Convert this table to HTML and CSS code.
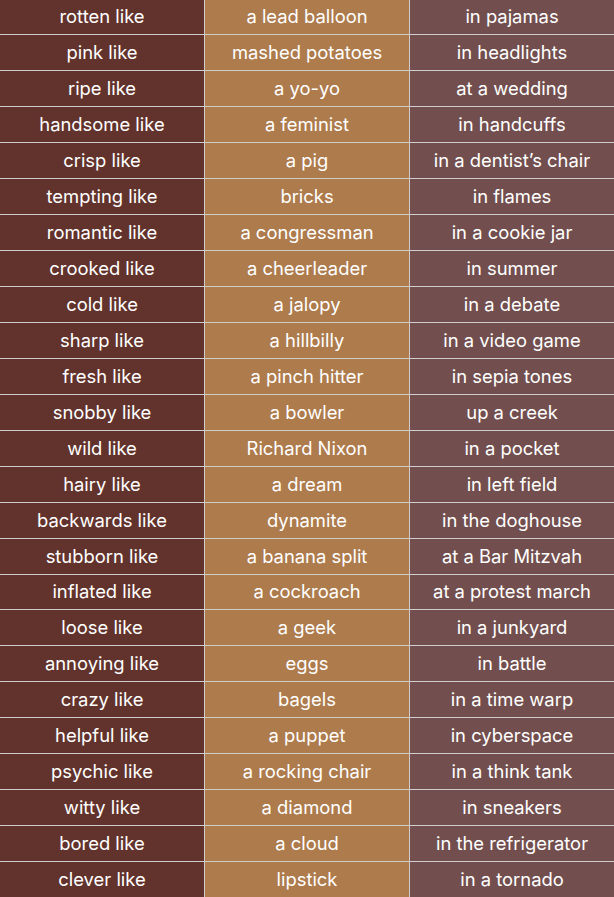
FILE: index.html
```html
<!DOCTYPE html>
<html>
<head>
<meta charset="utf-8">
<link rel="stylesheet" href="styles.css">
</head>
<body>
<div class="table">
<div class="row"><div class="cell c1">rotten like</div><div class="cell c2">a lead balloon</div><div class="cell c3">in pajamas</div></div>
<div class="row"><div class="cell c1">pink like</div><div class="cell c2">mashed potatoes</div><div class="cell c3">in headlights</div></div>
<div class="row"><div class="cell c1">ripe like</div><div class="cell c2">a yo-yo</div><div class="cell c3">at a wedding</div></div>
<div class="row"><div class="cell c1">handsome like</div><div class="cell c2">a feminist</div><div class="cell c3">in handcuffs</div></div>
<div class="row"><div class="cell c1">crisp like</div><div class="cell c2">a pig</div><div class="cell c3">in a dentist’s chair</div></div>
<div class="row"><div class="cell c1">tempting like</div><div class="cell c2">bricks</div><div class="cell c3">in flames</div></div>
<div class="row"><div class="cell c1">romantic like</div><div class="cell c2">a congressman</div><div class="cell c3">in a cookie jar</div></div>
<div class="row"><div class="cell c1">crooked like</div><div class="cell c2">a cheerleader</div><div class="cell c3">in summer</div></div>
<div class="row"><div class="cell c1">cold like</div><div class="cell c2">a jalopy</div><div class="cell c3">in a debate</div></div>
<div class="row"><div class="cell c1">sharp like</div><div class="cell c2">a hillbilly</div><div class="cell c3">in a video game</div></div>
<div class="row"><div class="cell c1">fresh like</div><div class="cell c2">a pinch hitter</div><div class="cell c3">in sepia tones</div></div>
<div class="row"><div class="cell c1">snobby like</div><div class="cell c2">a bowler</div><div class="cell c3">up a creek</div></div>
<div class="row"><div class="cell c1">wild like</div><div class="cell c2">Richard Nixon</div><div class="cell c3">in a pocket</div></div>
<div class="row"><div class="cell c1">hairy like</div><div class="cell c2">a dream</div><div class="cell c3">in left field</div></div>
<div class="row"><div class="cell c1">backwards like</div><div class="cell c2">dynamite</div><div class="cell c3">in the doghouse</div></div>
<div class="row"><div class="cell c1">stubborn like</div><div class="cell c2">a banana split</div><div class="cell c3">at a Bar Mitzvah</div></div>
<div class="row"><div class="cell c1">inflated like</div><div class="cell c2">a cockroach</div><div class="cell c3">at a protest march</div></div>
<div class="row"><div class="cell c1">loose like</div><div class="cell c2">a geek</div><div class="cell c3">in a junkyard</div></div>
<div class="row"><div class="cell c1">annoying like</div><div class="cell c2">eggs</div><div class="cell c3">in battle</div></div>
<div class="row"><div class="cell c1">crazy like</div><div class="cell c2">bagels</div><div class="cell c3">in a time warp</div></div>
<div class="row"><div class="cell c1">helpful like</div><div class="cell c2">a puppet</div><div class="cell c3">in cyberspace</div></div>
<div class="row"><div class="cell c1">psychic like</div><div class="cell c2">a rocking chair</div><div class="cell c3">in a think tank</div></div>
<div class="row"><div class="cell c1">witty like</div><div class="cell c2">a diamond</div><div class="cell c3">in sneakers</div></div>
<div class="row"><div class="cell c1">bored like</div><div class="cell c2">a cloud</div><div class="cell c3">in the refrigerator</div></div>
<div class="row"><div class="cell c1">clever like</div><div class="cell c2">lipstick</div><div class="cell c3">in a tornado</div></div>
</div>
</body>
</html>
```
FILE: styles.css
```css
html, body {
  margin: 0;
  padding: 0;
  background: #cfc8c6;
}
.table {
  display: flex;
  flex-direction: column;
  gap: 1px;
  margin-top: -1px;
  background: #d0cccb;
  font-family: Inter, "Noto Sans", sans-serif;
  font-size: 18.4px;
  color: #ffffff;
}
.row {
  display: grid;
  grid-template-columns: 204px 204px 204px;
  column-gap: 1px;
  height: 34.97px;
}
.cell {
  display: flex;
  align-items: center;
  justify-content: center;
  white-space: nowrap;
  padding-bottom: 1px;
}
.c1 { background: #62332c; }
.c2 { background: #ad7b4c; }
.c3 { background: #724f4e; }
```
